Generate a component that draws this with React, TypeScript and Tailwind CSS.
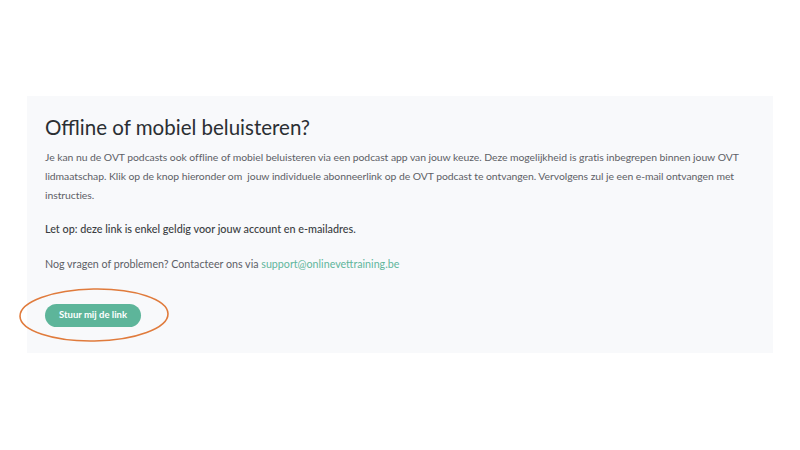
import React from 'react';

export default function App() {
  return (
    <div className="w-[800px] h-[450px] bg-white pt-[96px] font-['Lato',sans-serif]">
      {/* Podcast panel */}
      <section className="ml-[27px] w-[746px] h-[257px] bg-[#f8f9fb] px-[18px] pt-[17px]">
        <h2 className="text-[20.5px] leading-[28px] text-[#2b2f33]">Offline of mobiel beluisteren?</h2>
        <p className="mt-[7px] text-[10.4px] leading-[19px] text-[#5d6066] tracking-[-0.05px]">
          Je kan nu de OVT podcasts ook offline of mobiel beluisteren via een podcast app van jouw keuze. Deze mogelijkheid is gratis inbegrepen binnen jouw OVT lidmaatschap. Klik op de knop hieronder om&nbsp; jouw individuele abonneerlink op de OVT podcast te ontvangen. Vervolgens zul je een e-mail ontvangen met instructies.
        </p>
        <p className="mt-[14px] text-[10.8px] leading-[19px] text-[#3a3d42] font-medium">
          Let op: deze link is enkel geldig voor jouw account en e-mailadres.
        </p>
        <p className="mt-[16px] text-[10.7px] leading-[19px] text-[#5d6066]">
          Nog vragen of problemen? Contacteer ons via <a className="text-[#5fb69b]">support@onlinevettraining.be</a>
        </p>
        <div className="relative mt-[27px] w-fit">
          <button className="h-[23px] px-[14px] rounded-full bg-[#5db59a] text-white text-[9.5px] font-bold">
            Stuur mij de link
          </button>
          <svg className="absolute left-[-27px] top-[-13px]" width="152" height="56" viewBox="0 0 152 56">
            <ellipse cx="76" cy="28" rx="74" ry="26" fill="none" stroke="#e07b3c" strokeWidth="1.6" transform="rotate(-1 76 28)" />
          </svg>
        </div>
      </section>
    </div>
  );
}
